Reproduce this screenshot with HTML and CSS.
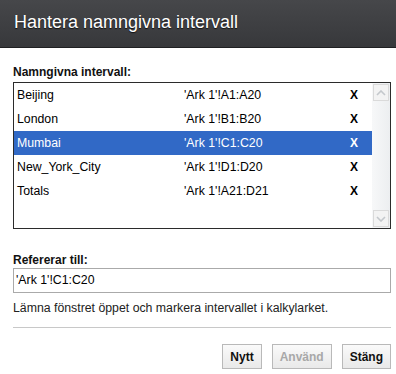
FILE: index.html
```html
<!DOCTYPE html>
<html lang="sv">
<head>
    <meta charset="utf-8">
    <link rel="stylesheet" href="styles.css">
    <title>Hantera namngivna intervall</title>
</head>
<body>
    <div class="dialog">
        <div class="dialog-header">Hantera namngivna intervall</div>
        <div class="dialog-body">
            <div class="field-label">Namngivna intervall:</div>
            <div class="range-list">
                <div class="range-rows">
                    <div class="range-row"><span class="range-name">Beijing</span><span class="range-ref">'Ark 1'!A1:A20</span><span class="range-del">X</span></div>
                    <div class="range-row"><span class="range-name">London</span><span class="range-ref">'Ark 1'!B1:B20</span><span class="range-del">X</span></div>
                    <div class="range-row selected"><span class="range-name">Mumbai</span><span class="range-ref">'Ark 1'!C1:C20</span><span class="range-del">X</span></div>
                    <div class="range-row"><span class="range-name">New_York_City</span><span class="range-ref">'Ark 1'!D1:D20</span><span class="range-del">X</span></div>
                    <div class="range-row"><span class="range-name">Totals</span><span class="range-ref">'Ark 1'!A21:D21</span><span class="range-del">X</span></div>
                </div>
                <div class="scrollbar">
                    <div class="scroll-btn">
                        <svg width="10" height="6" viewBox="0 0 10 6"><path d="M1 5 L5 1 L9 5" fill="none" stroke="#c4c8cc" stroke-width="1.6"/></svg>
                    </div>
                    <div class="scroll-track"></div>
                    <div class="scroll-btn">
                        <svg width="10" height="6" viewBox="0 0 10 6"><path d="M1 1 L5 5 L9 1" fill="none" stroke="#c4c8cc" stroke-width="1.6"/></svg>
                    </div>
                </div>
            </div>

            <div class="field-label ref-label">Refererar till:</div>
            <div class="ref-input">'Ark 1'!C1:C20</div>
            <div class="hint">Lämna fönstret öppet och markera intervallet i kalkylarket.</div>

            <div class="separator"></div>

            <div class="buttons">
                <button class="btn">Nytt</button>
                <button class="btn" disabled>Använd</button>
                <button class="btn">Stäng</button>
            </div>
        </div>
    </div>
</body>
</html>
```

FILE: styles.css
```css
body {
    margin: 0;
    background-color: #fff;
    font-family: "Liberation Sans", Arial, sans-serif;
    font-size: 12.3px;
    color: #000;
}

.dialog {
    width: 396px;
    height: 374px;
    overflow: hidden;
}

.dialog-header {
    height: 47px;
    line-height: 44px;
    padding-left: 14px;
    background: linear-gradient(#46474a, #37383b);
    border-bottom: 1px solid #1f2022;
    color: #fff;
    font-size: 18px;
    text-shadow: 0 1px 1px #111;
}

.dialog-body {
    padding: 17px 5px 0 13px;
}

.field-label {
    font-size: 12px;
    font-weight: bold;
    line-height: 14px;
    color: #111;
}

.range-list {
    display: flex;
    height: 145px;
    margin-top: 3px;
    border: 1px solid #2b2b2b;
}

.range-rows {
    flex: 1;
}

.range-row {
    display: flex;
    align-items: center;
    height: 24px;
    padding-left: 3px;
}

.range-row.selected {
    background-color: #3169c6;
    color: #fff;
}

.range-name {
    width: 167px;
}

.range-ref {
    width: 166px;
}

.range-del {
    font-weight: bold;
    font-size: 12px;
}

.scrollbar {
    width: 18px;
    display: flex;
    flex-direction: column;
    background: linear-gradient(to right, #f7f8f9, #eceef0);
}

.scroll-btn {
    height: 15px;
    margin: 1px 1px;
    display: flex;
    align-items: center;
    justify-content: center;
    background: #f3f3f3;
    border: 1px solid #dadada;
}

.scroll-track {
    flex: 1;
}

.ref-label {
    margin-top: 24px;
}

.ref-input {
    height: 23px;
    line-height: 22px;
    margin-top: 1px;
    padding-left: 2px;
    border: 1px solid #aaa;
}

.hint {
    margin-top: 8px;
    line-height: 14px;
    color: #222;
}

.separator {
    margin-top: 12px;
    border-top: 1px solid #c8c8c8;
}

.buttons {
    display: flex;
    justify-content: flex-end;
    gap: 10px;
    margin-top: 16px;
}

.btn {
    height: 25px;
    padding: 0 7px;
    font-family: "Liberation Sans", Arial, sans-serif;
    font-size: 12px;
    font-weight: bold;
    color: #111;
    background: linear-gradient(#fafafa, #e9e9e9);
    border: 1px solid #b9b9b9;
    border-radius: 0;
}

.btn:disabled {
    color: #a8a8a8;
}
```
